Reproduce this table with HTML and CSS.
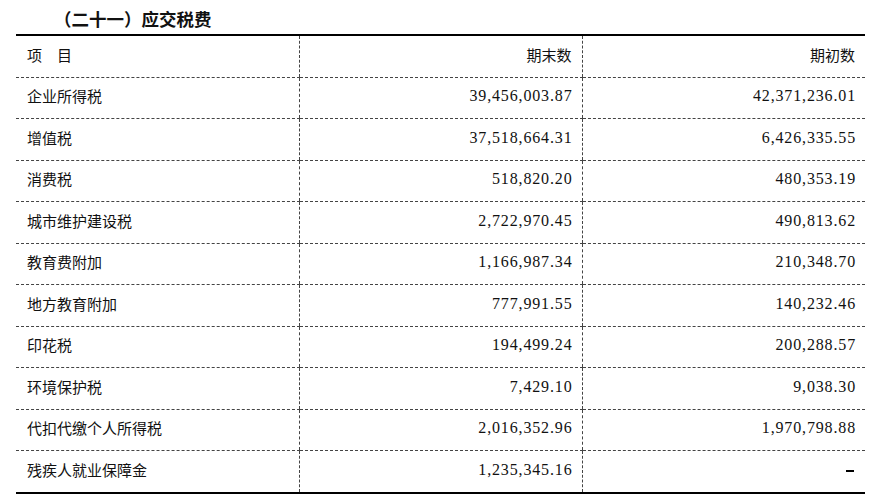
FILE: index.html
```html
<!DOCTYPE html>
<html lang="zh-CN">
<head>
<meta charset="utf-8">
<link rel="stylesheet" href="styles.css">
</head>
<body>
<div class="title">（二十一）应交税费</div>
<table class="tax">
  <thead>
    <tr><th class="item">项　目</th><th class="num">期末数</th><th class="num">期初数</th></tr>
  </thead>
  <tbody>
    <tr><td class="item">企业所得税</td><td class="num">39,456,003.87</td><td class="num">42,371,236.01</td></tr>
    <tr><td class="item">增值税</td><td class="num">37,518,664.31</td><td class="num">6,426,335.55</td></tr>
    <tr><td class="item">消费税</td><td class="num">518,820.20</td><td class="num">480,353.19</td></tr>
    <tr><td class="item">城市维护建设税</td><td class="num">2,722,970.45</td><td class="num">490,813.62</td></tr>
    <tr><td class="item">教育费附加</td><td class="num">1,166,987.34</td><td class="num">210,348.70</td></tr>
    <tr><td class="item">地方教育附加</td><td class="num">777,991.55</td><td class="num">140,232.46</td></tr>
    <tr><td class="item">印花税</td><td class="num">194,499.24</td><td class="num">200,288.57</td></tr>
    <tr><td class="item">环境保护税</td><td class="num">7,429.10</td><td class="num">9,038.30</td></tr>
    <tr><td class="item">代扣代缴个人所得税</td><td class="num">2,016,352.96</td><td class="num">1,970,798.88</td></tr>
    <tr><td class="item">残疾人就业保障金</td><td class="num">1,235,345.16</td><td class="num"><span class="dash"></span></td></tr>
  </tbody>
</table>
</body>
</html>
```

FILE: styles.css
```css
html, body {
  margin: 0;
  padding: 0;
  background: #fff;
}
body {
  color: #111;
  font-family: "Noto Sans CJK SC", "Noto Sans", sans-serif;
}
.title {
  height: 34px;
  padding-left: 54px;
  font-size: 17.5px;
  font-weight: 700;
  line-height: 40px;
  margin-top: -1px;
}
.tax {
  margin-left: 16px;
  width: 849px;
  border-collapse: collapse;
  table-layout: fixed;
  margin-top: 1px;
  border-top: 2px solid #000;
  border-bottom: 2px solid #000;
}
.tax th, .tax td {
  height: 37.5px;
  padding: 0 11px 3px 11px;
  font-weight: 400;
  font-size: 15px;
  border-bottom: 1px dashed #444;
  border-left: 1px dashed #444;
  vertical-align: middle;
  line-height: 20px;
}
.tax tr > :first-child {
  border-left: none;
}
.tax tbody tr:last-child td {
  border-bottom: none;
}
.tax .item {
  text-align: left;
}
.tax .num {
  text-align: right;
  padding-right: 10px;
}
.tax td.num {
  font-family: "Liberation Serif", "Times New Roman", serif;
  font-size: 16px;
  letter-spacing: 0.85px;
  padding-right: 9px;
}
.dash {
  display: inline-block;
  width: 8px;
  height: 2px;
  background: #000;
  vertical-align: 3px;
  margin-right: 2px;
}
```
